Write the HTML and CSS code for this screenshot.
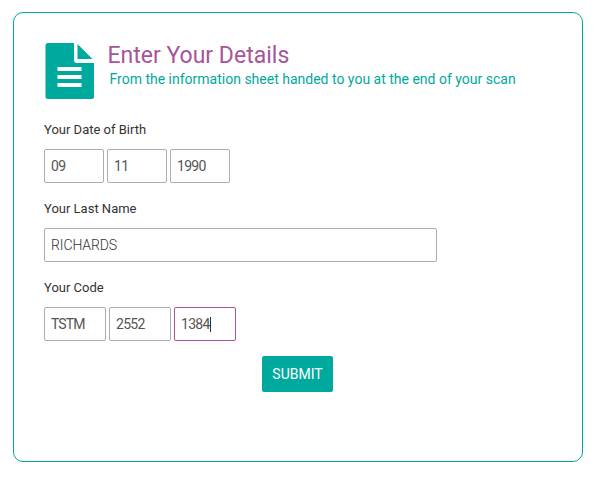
FILE: index.html
```html
<!DOCTYPE html>
<html lang="en">
<head>
<meta charset="utf-8">
<title>Enter Your Details</title>
<link rel="stylesheet" href="styles.css">
</head>
<body>
<main class="card">
  <header class="header">
    <svg class="icon" width="50" height="57" viewBox="-0.5 0 50 57">
      <path fill="currentColor" d="M2.500 0H28.500V17Q28.500 20 31.500 20H48.500V54Q48.500 56 46.500 56H2.500Q0 56 0 53.500V2.500Q0 0 2.500 0ZM32 1L47 16H32Z"/>
      <path fill="#fff" d="M12 24h24v4h-24zM12 32h24v4h-24zM12 40h24v4h-24z"/>
    </svg>
    <div class="titles">
      <h1 class="title"><span>Enter Your Details</span></h1>
      <p class="subtitle"><span>From the information sheet handed to you at the end of your scan</span></p>
    </div>
  </header>
  <section class="group">
    <div class="label"><span>Your Date of Birth</span></div>
    <div class="fields">
      <div class="field date"><span>09</span></div>
      <div class="field date"><span>11</span></div>
      <div class="field date"><span>1990</span></div>
    </div>
  </section>
  <section class="group">
    <div class="label"><span>Your Last Name</span></div>
    <div class="fields"><div class="field name"><span>RICHARDS</span></div></div>
  </section>
  <section class="group">
    <div class="label"><span>Your Code</span></div>
    <div class="fields">
      <div class="field code letters"><span>TSTM</span></div>
      <div class="field code"><span>2552</span></div>
      <div class="field code active"><span>1384</span><i class="caret"></i></div>
    </div>
  </section>
  <button class="submit" type="button">SUBMIT</button>
</main>
</body>
</html>
```
FILE: styles.css
```css
* { box-sizing: border-box; }
body { margin: 0; background: #fff; font-family: Roboto, sans-serif; color: #333; }
.card {
  width: 570px;
  height: 450px;
  margin: 12px 0 0 13px;
  padding: 30px;
  border: 1px solid #00a99d;
  border-radius: 10px;
  display: flex;
  flex-direction: column;
  align-items: flex-start;
}
.header { display: flex; height: 76px; }
.icon { color: #00a99d; margin-left: 1px; }
.titles { margin-left: 12.500px; white-space: nowrap; }
.title { margin: 0; font-size: 23px; line-height: 25px; font-weight: 400; color: #a7559a; }
.subtitle { margin: 2px 0 0 2px; font-size: 14px; line-height: 18px; color: #00a99d; }
.group { height: 79px; }
.label { padding-top: 1px; font-size: 13px; line-height: 20px; height: 30px; white-space: nowrap; }
.fields { display: flex; gap: 3px; }
.field {
  height: 34px;
  padding: 0 6px;
  border: 1px solid #adadad;
  border-radius: 2px;
  display: flex;
  align-items: center;
  font-size: 14px;
  letter-spacing: -0.7px;
  color: #555;
}
.date { width: 60px; }
.name { width: 393px; letter-spacing: -0.1px; font-weight: 300; color: #333; }
.code { width: 62px; }
.letters { letter-spacing: -0.9px; }
.active { border-color: #a7559a; }
.caret { width: 1px; height: 15px; margin-left: 0.3px; background: #333; }
.submit {
  width: 71px;
  height: 36px;
  margin: 0 0 0 218px;
  padding: 0;
  border: 0;
  border-radius: 2px;
  background: #00a99d;
  color: #fff;
  font: 400 14px Roboto, sans-serif;
}
```
